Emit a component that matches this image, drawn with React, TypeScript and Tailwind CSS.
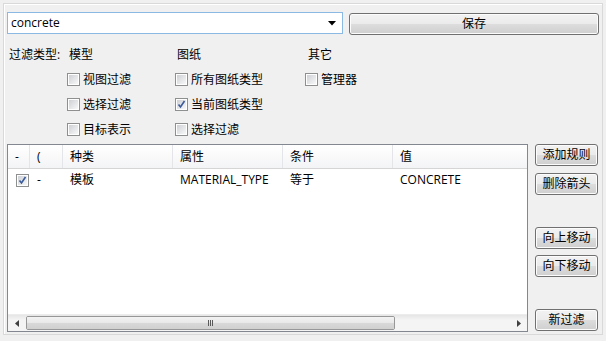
import React from "react";

const FONT = "font-['Open_Sans','Noto_Sans_CJK_SC',sans-serif]";
const BTN =
  "flex items-center justify-center border border-[#707070] rounded-[3px] shadow-[inset_0_0_0_1px_#fcfcfc] bg-[linear-gradient(#f2f2f2_0%,#ebebeb_50%,#dddddd_50%,#cfcfcf_100%)] text-[12px] text-black";

function Check({ checked }: { checked?: boolean }) {
  return (
    <span className="relative inline-flex w-[13px] h-[13px] border border-[#8e8f8f] bg-white p-[1px] shrink-0">
      <span className="block w-full h-full bg-[linear-gradient(135deg,#cdd0d4,#f8f8f8)]" />
      {checked && (
        <svg className="absolute left-0 top-0" width="11" height="11" viewBox="0 0 11 11">
          <path d="M2.5 5.5 L4.5 8 L8.5 2" fill="none" stroke="#3a5a9a" strokeWidth="1.6" />
        </svg>
      )}
    </span>
  );
}

function CheckItem({ label, checked }: { label: string; checked?: boolean }) {
  return (
    <div className="h-[25px] flex items-center gap-[3px]">
      <Check checked={checked} />
      <span>{label}</span>
    </div>
  );
}

const cols = [
  { w: "w-[22px]", t: "-" },
  { w: "w-[33px]", t: "(" },
  { w: "w-[110px]", t: "种类" },
  { w: "w-[110px]", t: "属性" },
  { w: "w-[110px]", t: "条件" },
  { w: "flex-1", t: "值" },
];

export default function App() {
  return (
    <div className={`w-[606px] h-[341px] bg-[#f0f0f0] pt-[3px] pl-[3px] ${FONT} text-[12px] text-black leading-none`}>
      <div className="w-[600px] h-[332px] border border-[#d9d9d9] shadow-[inset_1px_1px_0_#ffffff] pl-[3px] pt-[8px]">
        {/* top row */}
        <div className="flex h-[23px]">
          <div className="w-[336px] h-[22px] border border-[#8cb8e4] bg-white flex items-center pl-[3px] pr-[6px]">
            <span className="flex-1">concrete</span>
            <svg width="8" height="5" viewBox="0 0 8 5">
              <path d="M0 0 H8 L4 4.5 Z" fill="#000" />
            </svg>
          </div>
          <div className={`${BTN} ml-[6px] mt-[1px] w-[250px] h-[22px]`}>保存</div>
        </div>

        {/* filter */}
        <div className="flex mt-[7px]">
          <div className="w-[60px] pl-[2px]">
            <div className="h-[25px] flex items-center">过滤类型:</div>
          </div>
          <div className="w-[108px]">
            <div className="h-[25px] flex items-center pl-[2px]">模型</div>
            <CheckItem label="视图过滤" />
            <CheckItem label="选择过滤" />
            <CheckItem label="目标表示" />
          </div>
          <div className="w-[130px]">
            <div className="h-[25px] flex items-center pl-[2px]">图纸</div>
            <CheckItem label="所有图纸类型" />
            <CheckItem label="当前图纸类型" checked />
            <CheckItem label="选择过滤" />
          </div>
          <div>
            <div className="h-[25px] flex items-center pl-[3px]">其它</div>
            <CheckItem label="管理器" />
          </div>
        </div>

        {/* bottom area */}
        <div className="flex mt-[2px]">
          <div className="w-[521px] h-[188px] border border-[#828790] bg-white flex flex-col">
            <div className="flex h-[24px] border-b border-[#d5d5d5] bg-[linear-gradient(#ffffff,#f3f4f6)]">
              {cols.map((c, i) => (
                <div
                  key={i}
                  className={`${c.w} h-full flex items-center pl-[7px] ${i < 5 ? "border-r border-[#e3e5e8]" : ""}`}
                >
                  {c.t}
                </div>
              ))}
            </div>
            <div className="flex h-[22px] items-center">
              <div className="w-[22px] pl-[8px] flex items-center">
                <Check checked />
              </div>
              <div className="w-[33px] pl-[7px]">-</div>
              <div className="w-[110px] pl-[7px]">模板</div>
              <div className="w-[110px] pl-[7px]">MATERIAL_TYPE</div>
              <div className="w-[110px] pl-[7px]">等于</div>
              <div className="flex-1 pl-[7px]">CONCRETE</div>
            </div>
            <div className="flex-1" />
            {/* horizontal scrollbar */}
            <div className="h-[17px] flex bg-[linear-gradient(#e6e6e6,#f4f4f4_30%,#f4f4f4)] border-t border-[#ececec]">
              <div className="w-[17px] flex items-center justify-center">
                <svg width="4" height="7" viewBox="0 0 4 7">
                  <path d="M4 0 V7 L0 3.5 Z" fill="#404040" />
                </svg>
              </div>
              <div className="flex-1 flex py-[1px] pl-[1px] pr-[115px]">
                <div className="flex-1 border border-[#979797] rounded-[2px] bg-[linear-gradient(90deg,#f0f0f0,#e6e6e6)] shadow-[inset_0_0_0_1px_#fafafa] flex items-center justify-center">
                  <div className="w-full h-full bg-[linear-gradient(#f3f3f3_0%,#e8e8e8_50%,#d9d9d9_50%,#d0d0d0_100%)] rounded-[1px] flex items-center justify-center gap-[1px]">
                    <span className="w-[1px] h-[6px] bg-[#5a5a5a]" />
                    <span className="w-[1px] h-[6px] bg-[#5a5a5a]" />
                    <span className="w-[1px] h-[6px] bg-[#5a5a5a]" />
                  </div>
                </div>
              </div>
              <div className="w-[17px] flex items-center justify-center">
                <svg width="4" height="7" viewBox="0 0 4 7">
                  <path d="M0 0 V7 L4 3.5 Z" fill="#404040" />
                </svg>
              </div>
            </div>
          </div>

          <div className="ml-[7px] w-[63px] flex flex-col">
            <div className={`${BTN} h-[22px]`}>添加规则</div>
            <div className={`${BTN} h-[22px] mt-[7px]`}>删除箭头</div>
            <div className={`${BTN} h-[22px] mt-[32px]`}>向上移动</div>
            <div className={`${BTN} h-[22px] mt-[6px]`}>向下移动</div>
            <div className={`${BTN} h-[22px] mt-[32px]`}>新过滤</div>
          </div>
        </div>
      </div>
    </div>
  );
}
